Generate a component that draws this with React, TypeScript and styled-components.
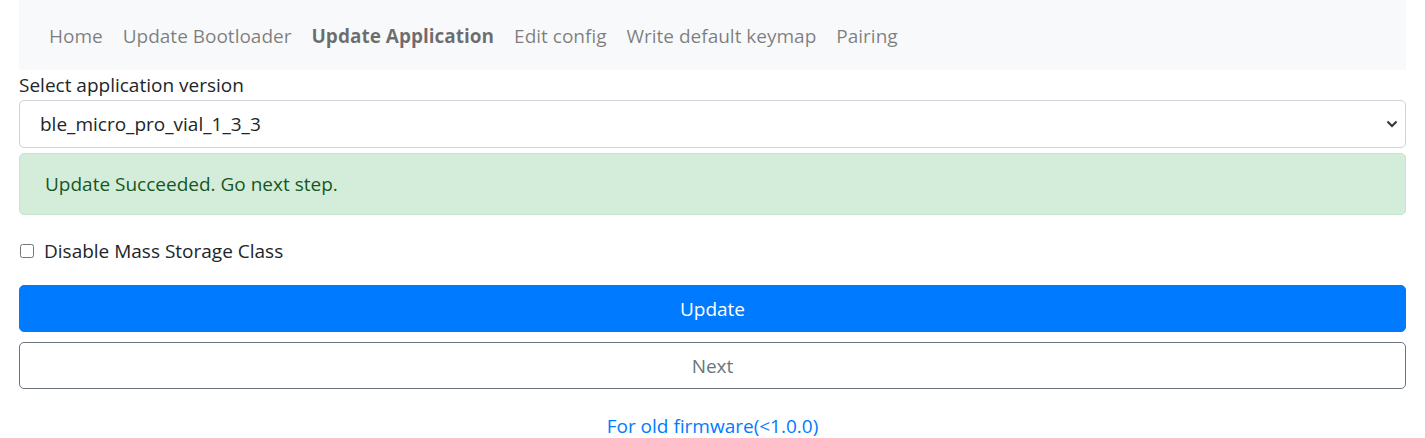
import React from "react";
import styled, { createGlobalStyle } from "styled-components";

const Global = createGlobalStyle`
  html, body { margin: 0; padding: 0; background: #fff; }
  body {
    font-family: "Open Sans", "Noto Sans", Arial, sans-serif;
    font-size: 19px;
    line-height: 30px;
    color: #212529;
  }
  * { box-sizing: border-box; }
`;

const Page = styled.div`
  padding: 0 19px;
  display: flex;
  flex-direction: column;
`;

const Navbar = styled.nav`
  background: #f8f9fa;
  height: 70px;
  padding: 11px 20px 9px;
  display: flex;
  align-items: center;
`;

const NavList = styled.div`
  display: flex;
`;

const NavLink = styled.a<{ $active?: boolean }>`
  padding: 10px 10px;
  color: ${(p) => (p.$active ? "rgba(0,0,0,0.56)" : "rgba(0,0,0,0.5)")};
  font-weight: ${(p) => (p.$active ? 700 : 400)};
  text-decoration: none;
  cursor: pointer;
`;

const Label = styled.label`
  display: block;
  margin: 0;
  height: 30px;
`;

const SelectWrap = styled.div`
  position: relative;
  height: 48px;
`;

const Select = styled.select`
  appearance: none;
  -webkit-appearance: none;
  width: 100%;
  height: 48px;
  padding: 0 40px 0 20px;
  font: inherit;
  color: #212529;
  background: #fff;
  border: 1px solid #ced4da;
  border-radius: 5px;
  outline: none;
`;

const Chevron = styled.svg`
  position: absolute;
  right: 8px;
  top: 19px;
  width: 12px;
  height: 9px;
  pointer-events: none;
`;

const Alert = styled.div`
  margin-top: 5px;
  padding: 15px 25px;
  background: #d4edda;
  border: 1px solid #c3e6cb;
  border-radius: 5px;
  color: #155724;
`;

const CheckRow = styled.label`
  display: flex;
  align-items: center;
  gap: 10px;
  margin-top: 21px;
  height: 30px;
`;

const Check = styled.input`
  margin: 0 0 0 1px;
  width: 14px;
  height: 14px;
`;

const Button = styled.button<{ $primary?: boolean }>`
  width: 100%;
  height: 47px;
  font: inherit;
  border-radius: 5px;
  cursor: pointer;
  border: 1px solid ${(p) => (p.$primary ? "#007bff" : "#6c757d")};
  background: ${(p) => (p.$primary ? "#007bff" : "#fff")};
  color: ${(p) => (p.$primary ? "#fff" : "#6c757d")};
`;

const Buttons = styled.div`
  display: flex;
  flex-direction: column;
  gap: 10px;
  margin-top: 19px;
`;

const Footer = styled.div`
  margin-top: 22px;
  text-align: center;
`;

const Link = styled.a`
  color: #007bff;
  text-decoration: none;
`;

export default function App() {
  const nav = [
    "Home",
    "Update Bootloader",
    "Update Application",
    "Edit config",
    "Write default keymap",
    "Pairing",
  ];
  return (
    <>
      <Global />
      <Page>
        <Navbar>
          <NavList>
            {nav.map((n) => (
              <NavLink key={n} $active={n === "Update Application"}>
                {n}
              </NavLink>
            ))}
          </NavList>
        </Navbar>
        <Label>Select application version</Label>
        <SelectWrap>
          <Select defaultValue="ble_micro_pro_vial_1_3_3">
            <option>ble_micro_pro_vial_1_3_3</option>
          </Select>
          <Chevron viewBox="0 0 12 9">
            <path d="M1.5 2.5 L6 7 L10.5 2.5" fill="none" stroke="#333" strokeWidth="2" />
          </Chevron>
        </SelectWrap>
        <Alert>Update Succeeded. Go next step.</Alert>
        <CheckRow>
          <Check type="checkbox" />
          Disable Mass Storage Class
        </CheckRow>
        <Buttons>
          <Button $primary>Update</Button>
          <Button>Next</Button>
        </Buttons>
        <Footer>
          <Link>For old firmware(&lt;1.0.0)</Link>
        </Footer>
      </Page>
    </>
  );
}
